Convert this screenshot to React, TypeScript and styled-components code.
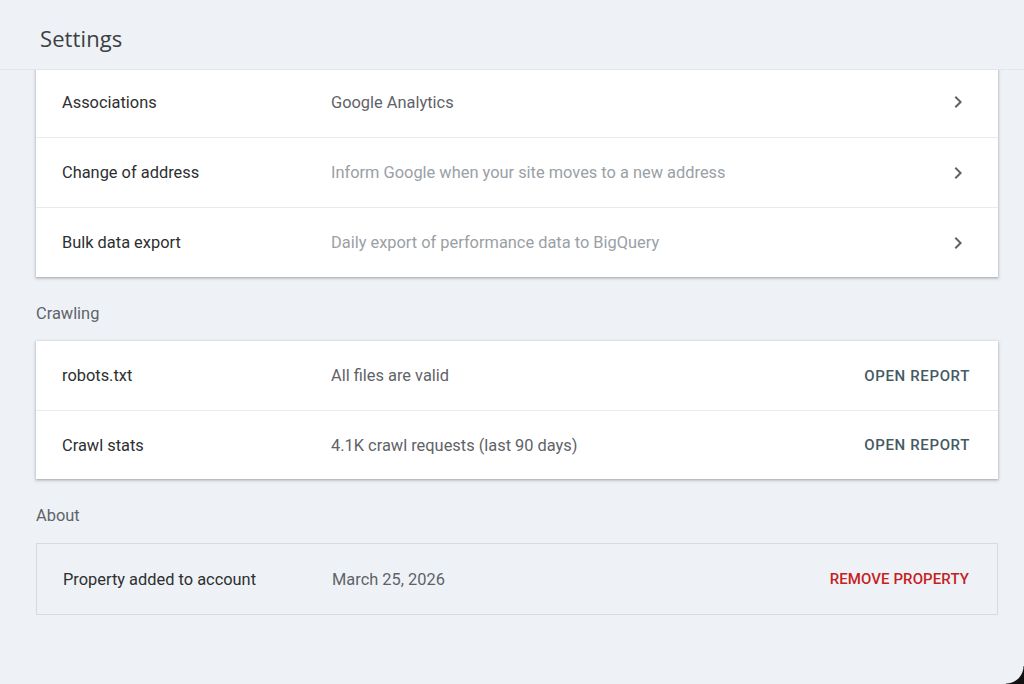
import styled, { createGlobalStyle } from "styled-components";

const GlobalStyle = createGlobalStyle`
  html, body {
    margin: 0;
    padding: 0;
    background: #eef2f7;
    font-family: Roboto, "Liberation Sans", Arial, sans-serif;
    -webkit-font-smoothing: antialiased;
  }
`;

type Row = {
  label: string;
  value: string;
  muted?: boolean;
  action?: "chevron" | string;
  danger?: boolean;
};

const general: Row[] = [
  { label: "Associations", value: "Google Analytics", action: "chevron" },
  {
    label: "Change of address",
    value: "Inform Google when your site moves to a new address",
    muted: true,
    action: "chevron",
  },
  {
    label: "Bulk data export",
    value: "Daily export of performance data to BigQuery",
    muted: true,
    action: "chevron",
  },
];

const crawling: Row[] = [
  { label: "robots.txt", value: "All files are valid", action: "OPEN REPORT" },
  {
    label: "Crawl stats",
    value: "4.1K crawl requests (last 90 days)",
    action: "OPEN REPORT",
  },
];

const ChevronRight = () => (
  <svg width="24" height="24" viewBox="0 0 24 24" aria-hidden="true">
    <path
      d="M10 6L8.59 7.41 13.17 12l-4.58 4.59L10 18l6-6z"
      fill="#5f6368"
    />
  </svg>
);

const SettingRow = ({ row, height = 70 }: { row: Row; height?: number }) => (
  <RowItem $height={height}>
    <Label>{row.label}</Label>
    <Value $muted={row.muted}>{row.value}</Value>
    {row.action === "chevron" ? (
      <IconButton aria-label={`Open ${row.label}`}>
        <ChevronRight />
      </IconButton>
    ) : (
      <TextButton $danger={row.danger}>{row.action}</TextButton>
    )}
  </RowItem>
);

export default function App() {
  return (
    <>
      <GlobalStyle />
      <Page>
        <Header>
          <Title>Settings</Title>
        </Header>
        <Content>
          <Card>
            {general.map((row) => (
              <SettingRow key={row.label} row={row} />
            ))}
          </Card>

          <SectionTitle>Crawling</SectionTitle>
          <Card>
            {crawling.map((row) => (
              <SettingRow key={row.label} row={row} height={69} />
            ))}
          </Card>

          <SectionTitle>About</SectionTitle>
          <OutlinedCard>
            <SettingRow
              row={{
                label: "Property added to account",
                value: "March 25, 2026",
                action: "REMOVE PROPERTY",
                danger: true,
              }}
            />
          </OutlinedCard>
        </Content>
        <ScreenCorner />
      </Page>
    </>
  );
}

const Page = styled.div`
  position: relative;
  width: 1024px;
  height: 684px;
  overflow: hidden;
  background: #eef2f7;
`;

const Header = styled.header`
  position: relative;
  z-index: 2;
  height: 70px;
  display: flex;
  align-items: center;
  padding: 6px 40px 0;
  box-sizing: border-box;
  background: #eef2f7;
  border-bottom: 1px solid #e3e7ec;
`;

const Title = styled.h1`
  margin: 0;
  font-family: "Open Sans", Roboto, sans-serif;
  font-size: 22px;
  font-weight: 400;
  color: #3c4043;
  letter-spacing: 0.1px;
`;

const Content = styled.main`
  margin-top: -3px;
  padding: 0 26px 0 36px;
`;

const Card = styled.section`
  background: #ffffff;
  box-shadow: 0 1px 2px rgba(60, 64, 67, 0.3), 0 1px 3px 1px rgba(60, 64, 67, 0.15);

  & > div + div {
    border-top: 1px solid #e8eaed;
  }
`;

const OutlinedCard = styled.section`
  border: 1px solid #d7dbe0;
  background: transparent;
`;

const RowItem = styled.div<{ $height: number }>`
  height: ${(p) => p.$height}px;
  box-sizing: border-box;
  display: grid;
  grid-template-columns: 269px 1fr auto;
  align-items: center;
  padding: 0 28px 0 26px;
`;

const Label = styled.div`
  font-size: 16.4px;
  color: #2d2f31;
`;

const Value = styled.div<{ $muted?: boolean }>`
  font-size: 16.4px;
  color: ${(p) => (p.$muted ? "#9aa0a6" : "#5f6368")};
`;

const IconButton = styled.button`
  width: 24px;
  height: 24px;
  padding: 0;
  border: 0;
  background: none;
  display: flex;
  align-items: center;
  justify-content: center;
  cursor: pointer;
`;

const TextButton = styled.button<{ $danger?: boolean }>`
  border: 0;
  background: none;
  padding: 0;
  font-family: Roboto, sans-serif;
  font-size: 15px;
  font-weight: 500;
  letter-spacing: ${(p) => (p.$danger ? "0.1px" : "0.65px")};
  color: ${(p) => (p.$danger ? "#c5221f" : "#455a64")};
  cursor: pointer;
`;

const SectionTitle = styled.h2`
  margin: 0;
  padding: 27px 0 17px;
  line-height: 20px;
  font-size: 16.4px;
  font-weight: 400;
  color: #5f6368;
`;

const ScreenCorner = styled.div`
  position: absolute;
  right: 0;
  bottom: 0;
  width: 18px;
  height: 18px;
  background: radial-gradient(circle at 0 0, transparent 17px, #111 18px);
`;
